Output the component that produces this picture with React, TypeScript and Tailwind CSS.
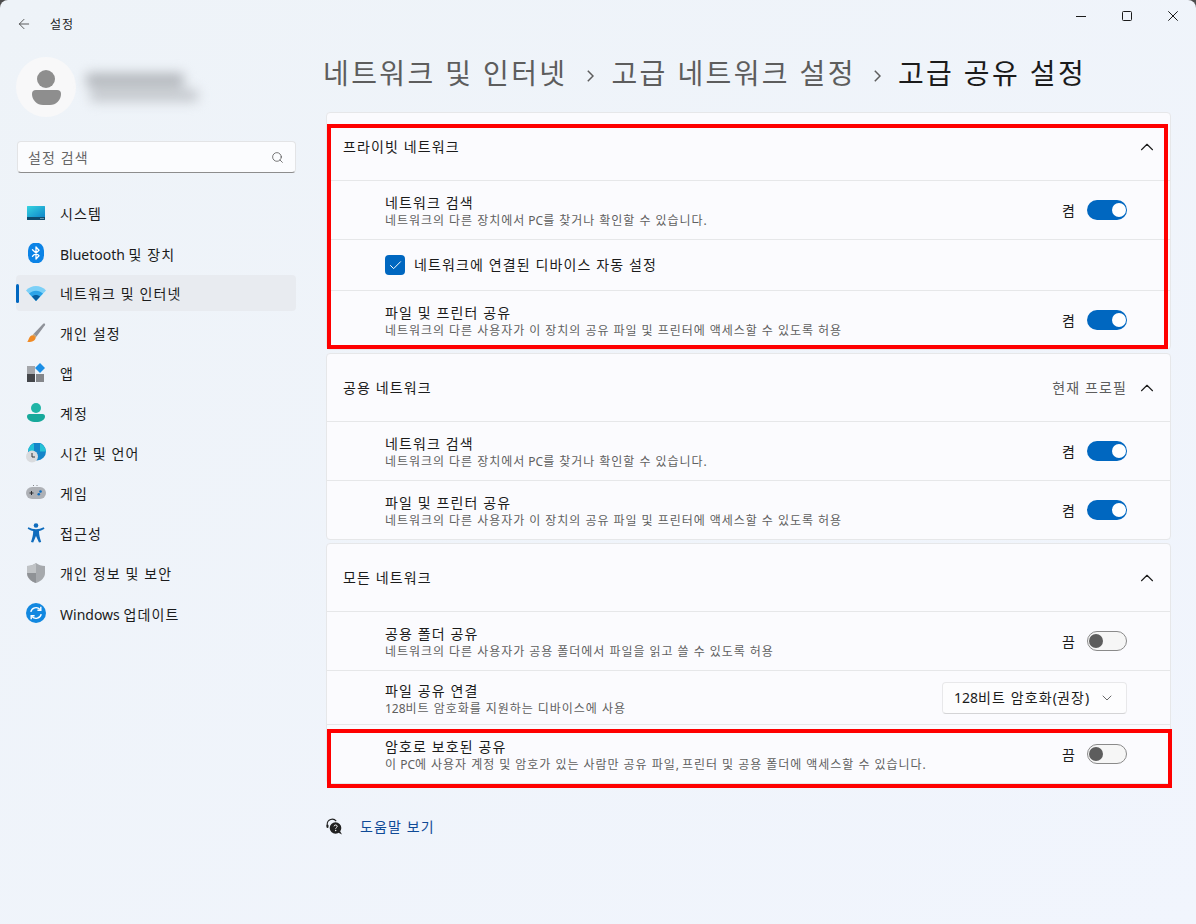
import React from 'react';
import { ArrowLeft, Check, ChevronDown, ChevronUp, Search } from 'lucide-react';

const FONT = "font-['Noto_Sans','Noto_Sans_CJK_KR',sans-serif]";

// Hangul in the screenshot sits on a full em, Noto's on 0.92em, so only those runs get tracked
const Ko = ({ children, tracking = 'tracking-[0.08em]' }: { children: string; tracking?: string }) => (
  <>
    {children.split(/([\uAC00-\uD7A3]+(?: [\uAC00-\uD7A3]+)*)/).map((part, i) =>
      i % 2 === 1 ? (
        <span key={i} className={tracking}>{part}</span>
      ) : (
        part
      )
    )}
  </>
);

// Colourful settings icons, drawn on a 20x20 box
const SystemIcon = () => (
  <svg width="20" height="20" viewBox="0 0 20 20">
    <defs>
      <linearGradient id="sys" x1="0" y1="0" x2="1" y2="1">
        <stop offset="0" stopColor="#35d4e0" />
        <stop offset="1" stopColor="#0f86c9" />
      </linearGradient>
    </defs>
    <path d="M1 3.500a.5.5 0 0 1 .5-.5h17a.5.5 0 0 1 .5.5V14H1z" fill="url(#sys)" />
    <path d="M1 14h18v2.500a.5.5 0 0 1-.5.5h-17a.5.5 0 0 1-.5-.5z" fill="#0e4c6e" />
    <rect x="14.500" y="15" width="1" height="1" fill="#b7dcec" />
    <rect x="16.500" y="15" width="1" height="1" fill="#b7dcec" />
  </svg>
);

const BluetoothIcon = () => (
  <svg width="20" height="20" viewBox="0 0 20 20">
    <rect x="2" y="-0.5" width="16" height="21" rx="8" fill="#0b83e6" />
    <path d="M6.500 6.700 13 12.800 10 16V4l3 3.200-6.500 6.100" fill="none" stroke="#fff" strokeWidth="1.300" strokeLinejoin="round" strokeLinecap="round" />
  </svg>
);

const WifiIcon = () => (
  <svg width="20" height="20" viewBox="0 0 20 20">
    <path d="M0 7.500C2.600 4.600 6.100 3 10 3s7.400 1.600 10 4.500L10 18z" fill="#7cd0f7" />
    <path d="M3 10.600C5 8.700 7.400 7.700 10 7.700s5 1 7 2.900L10 18z" fill="#2ba3e8" />
    <path d="M6 13.600c1.100-1 2.500-1.500 4-1.500s2.900.5 4 1.500L10 18z" fill="#075c9e" />
  </svg>
);

const BrushIcon = () => (
  <svg width="20" height="20" viewBox="0 0 20 20">
    <path d="M18.600.6c.6.4.7 1 .3 1.600L10.500 13.400 7.500 11 17.200.8c.4-.4.9-.5 1.400-.2z" fill="#8f9299" />
    <path d="M7.500 11l3 2.400-.8 1.600L6.300 12.300z" fill="#c9a06a" />
    <path d="M6.200 12.200c1.500.3 3 1.500 3.400 3-.5 2.700-4.500 4.100-8.600 3.600 2-1.400 1.500-5.400 5.200-6.600z" fill="#f08a24" />
  </svg>
);

const AppsIcon = () => (
  <svg width="20" height="20" viewBox="0 0 20 20">
    <rect x="1" y="3" width="8" height="8" fill="#a4a6aa" />
    <rect x="1" y="11" width="8" height="8" fill="#44464a" />
    <rect x="10" y="11" width="8" height="8" fill="#85878b" />
    <path d="m14 0 5 5-5 5-5-5z" fill="#1b8fe6" />
  </svg>
);

const AccountIcon = () => (
  <svg width="20" height="20" viewBox="0 0 20 20">
    <circle cx="10" cy="5" r="5" fill="#1fb5a6" />
    <path d="M1 13.500A2.500 2.500 0 0 1 3.500 11h13a2.500 2.500 0 0 1 2.500 2.500c0 3.500-4 5.500-9 5.500s-9-2-9-5.500z" fill="#17a99b" />
  </svg>
);

const TimeIcon = () => (
  <svg width="20" height="20" viewBox="0 0 20 20">
    <circle cx="11" cy="8.500" r="9" fill="#1585c9" />
    <path d="M11 0a9 9 0 0 1 9 8.500h-6V.6zM2 8c.5-3.500 3-6.500 6-7.400V8z" fill="#25c2d6" />
    <circle cx="6" cy="13.500" r="6" fill="#d9dbde" />
    <path d="M6 10v4h3" fill="none" stroke="#33363a" strokeWidth="1" />
  </svg>
);

const GameIcon = () => (
  <svg width="20" height="20" viewBox="0 0 20 20">
    <rect x="0" y="4" width="20" height="12" rx="6" fill="#aeb1b6" />
    <path d="M3.500 10h4M5.500 8v4" stroke="#2a2c30" strokeWidth="1" />
    <circle cx="14.500" cy="8.500" r="1.300" fill="#0f6cbd" />
    <circle cx="12.800" cy="11.200" r="1.300" fill="#0f6cbd" />
    <circle cx="7.500" cy="2.500" r=".5" fill="#666" />
    <circle cx="11" cy="2.500" r=".5" fill="#666" />
  </svg>
);

const AccessIcon = () => (
  <svg width="20" height="20" viewBox="0 0 20 20">
    <circle cx="10" cy="2.500" r="2.300" fill="#0f6cbd" />
    <path d="M2.300 4.200c2.500 1.300 5 2 7.700 2s5.200-.7 7.700-2l.8 1.500c-1.900 1.200-3.800 2-5.500 2.300 0 3.500.8 7 2.200 11l-2.200.6L10 13l-2.800 6.600-2.200-.6c1.400-4 2.200-7.500 2.200-11-1.700-.3-3.600-1.100-5.500-2.300z" fill="#0f6cbd" />
  </svg>
);

const ShieldIcon = () => (
  <svg width="20" height="20" viewBox="0 0 20 20">
    <path d="M10 0c2.500 2 5.500 3 9 3v7c0 4.500-3.500 8-9 10-5.500-2-9-5.500-9-10V3c3.500 0 6.500-1 9-3z" fill="#a6a9ad" />
    <path d="M10 0v20C4.500 18 1 14.500 1 10V3c3.500 0 6.500-1 9-3z" fill="#c0c3c6" />
    <path d="M1 10h9v10C5 18.500 1.500 14.800 1 10z" fill="#8f9296" />
  </svg>
);

const UpdateIcon = () => (
  <svg width="20" height="20" viewBox="0 0 20 20">
    <circle cx="10" cy="10" r="10" fill="#1288e0" />
    <path d="M4.800 8.800a5.300 5.300 0 0 1 9.200-2.300M15.200 11.200a5.300 5.300 0 0 1-9.200 2.300" fill="none" stroke="#fff" strokeWidth="1.400" />
    <path d="M14.800 3.800v3.400h-3.400M5.200 16.200v-3.400h3.400" fill="none" stroke="#fff" strokeWidth="1.400" />
  </svg>
);

const HelpIcon = () => (
  <svg width="18" height="18" viewBox="0 0 18 18">
    <path d="M1.200 8.500V6.200a5 5 0 0 1 9-3" fill="none" stroke="#222" strokeWidth="1.100" />
    <rect x=".5" y="6.500" width="2" height="3.500" rx="1" fill="#222" />
    <circle cx="9.500" cy="10" r="5.800" fill="#222" />
    <path d="m12 14.500 4 2-2-3.500z" fill="#222" />
    <path d="M8 8.300c.2-1.800 3.200-1.700 3.200 0 0 1.200-1.500 1.200-1.500 2.400" fill="none" stroke="#fff" strokeWidth="1" />
    <circle cx="9.700" cy="12.500" r=".7" fill="#fff" />
  </svg>
);

const NAV_ITEMS = [
  { label: '시스템', icon: <SystemIcon /> },
  { label: 'Bluetooth 및 장치', icon: <BluetoothIcon />, latin: true },
  { label: '네트워크 및 인터넷', icon: <WifiIcon />, active: true },
  { label: '개인 설정', icon: <BrushIcon /> },
  { label: '앱', icon: <AppsIcon /> },
  { label: '계정', icon: <AccountIcon /> },
  { label: '시간 및 언어', icon: <TimeIcon /> },
  { label: '게임', icon: <GameIcon /> },
  { label: '접근성', icon: <AccessIcon /> },
  { label: '개인 정보 및 보안', icon: <ShieldIcon /> },
  { label: 'Windows 업데이트', icon: <UpdateIcon />, latin: true },
];

const Crumb = ({ className }: { className: string }) => (
  <svg width="7" height="12" viewBox="0 0 7 12" className={className}>
    <path d="m.8.8 5.200 5.200-5.200 5.200" fill="none" stroke="#5d5d5d" strokeWidth="1.500" />
  </svg>
);

const Toggle = ({ on }: { on: boolean }) => (
  <div className="flex items-center gap-3">
    <span className="mt-[2px] w-[13px] text-[14px] leading-5 text-[#1b1b1b] whitespace-nowrap">{on ? '켬' : '끔'}</span>
    {on ? (
      <div className="flex h-5 w-10 items-center justify-end rounded-full bg-[#0067c0] pr-[1px]">
        <div className="h-[14px] w-[14px] rounded-full bg-white" />
      </div>
    ) : (
      <div className="flex h-5 w-10 items-center rounded-full border border-[#8a8a8a] bg-[#f6f6f6] pl-[1px]">
        <div className="h-[14px] w-[14px] rounded-full bg-[#5d5d5d]" />
      </div>
    )}
  </div>
);

const RowText = ({ title, sub }: { title: string; sub: string }) => (
  <div className="flex flex-col pt-1">
    <span className="text-[14px] leading-[18px] text-[#1b1b1b]"><Ko>{title}</Ko></span>
    <span className="text-[12px] leading-[18px] text-[#5f5f5f]"><Ko>{sub}</Ko></span>
  </div>
);

const Row = ({ title, sub, on }: { title: string; sub: string; on: boolean }) => (
  <div className="flex h-[59px] items-center justify-between border-b border-[#e6e7e9] pl-[58px] pr-[43px] last:h-[58px] last:border-b-0">
    <RowText title={title} sub={sub} />
    <Toggle on={on} />
  </div>
);

const CardHeader = ({ title, extra }: { title: string; extra?: string }) => (
  <div className="flex h-[68px] items-center justify-between border-b border-[#e6e7e9] pl-4 pr-3">
    <span className="text-[14px] text-[#1b1b1b]"><Ko>{title}</Ko></span>
    <div className="flex items-center gap-[9px]">
      {extra && <span className="text-[14px] text-[#5d5d5d]"><Ko>{extra}</Ko></span>}
      <ChevronUp size={22} strokeWidth={1.2} className="text-[#1b1b1b]" />
    </div>
  </div>
);

const Card = ({ children }: { children: React.ReactNode }) => (
  <div className="rounded-[4px] border border-[#e6e7e9] bg-[#fbfbfe]">{children}</div>
);

export default function App() {
  const titleTracking = 'tracking-[0.085em]';
  return (
    <div className={`${FONT} relative h-[924px] w-[1196px] overflow-hidden bg-[#4d4d4d]`}>
      <div className="flex h-full flex-col rounded-t-[8px] bg-gradient-to-br from-[#eef3f8] to-[#f1f5fd]">
        {/* Title bar */}
        <div className="flex h-[48px] justify-between">
          <div className="flex items-center">
            <ArrowLeft size={16} strokeWidth={1.3} className="ml-4 text-[#444]" />
            <span className="ml-[18px] mt-[1px] text-[12px] text-[#1b1b1b]"><Ko>설정</Ko></span>
          </div>
          <div className="flex items-start gap-[36px] pr-[18px] pt-[11px]">
            <svg width="10" height="10" viewBox="0 0 10 10"><path d="M0 5.500h10" stroke="#1b1b1b" strokeWidth="1" /></svg>
            <svg width="10" height="10" viewBox="0 0 10 10"><rect x=".5" y=".5" width="9" height="9" rx="1" fill="none" stroke="#1b1b1b" strokeWidth="1" /></svg>
            <svg width="10" height="10" viewBox="0 0 10 10"><path d="m.3.3 9.400 9.400M9.700.3.3 9.700" stroke="#1b1b1b" strokeWidth="1" /></svg>
          </div>
        </div>

        <div className="flex flex-1">
          {/* Sidebar */}
          <div className="flex w-[326px] flex-col pl-4 pr-[30px]">
            <div className="mt-[9px] flex items-center">
              <div className="flex h-[60px] w-[60px] flex-col items-center justify-center gap-[2px] rounded-full bg-[#f8f8f9]">
                <div className="h-[18px] w-[18px] rounded-full bg-[#8e8e8e]" />
                <div className="h-[15px] w-[29px] rounded-b-[14px] rounded-t-[5px] bg-[#8e8e8e]" />
              </div>
              <div className="ml-[10px] flex flex-col gap-[2px] blur-[6px]">
                <div className="h-[14px] w-[98px] rounded-sm bg-[#b4b8bd]" />
                <div className="ml-1 h-[13px] w-[108px] rounded-sm bg-[#c6cacf]" />
              </div>
            </div>

            <div className="ml-[1px] mt-6 flex h-8 items-center justify-between rounded-[4px] border border-[#e3e4e6] border-b-[#8d8d8d] bg-[#fbfcfe] pl-[10px] pr-[11px]">
              <span className="text-[14px] text-[#666]"><Ko>설정 검색</Ko></span>
              <Search size={13} strokeWidth={1.2} className="text-[#333]" />
            </div>

            <div className="mt-[22px] flex flex-col gap-1">
              {NAV_ITEMS.map((item) => (
                <div
                  key={item.label}
                  className={`relative flex h-9 items-center rounded-[4px] pl-[10px] ${item.active ? 'bg-[#e8ebf0]' : ''}`}
                >
                  {item.active && (
                    <div className="absolute left-0 top-[9px] h-[19px] w-[3px] rounded-full bg-[#0067c0]" />
                  )}
                  {item.icon}
                  <span className={`ml-[14px] text-[14px] text-[#1b1b1b] ${item.latin ? 'mt-[2px]' : ''}`}><Ko>{item.label}</Ko></span>
                </div>
              ))}
            </div>
          </div>

          {/* Main column */}
          <div className="flex w-[845px] flex-col">
            <div className="-ml-[3px] mt-[5px] flex h-[41px] items-center gap-[17px] whitespace-nowrap text-[28px] leading-[41px] text-[#5d5d5d]">
              <span><Ko tracking={titleTracking}>네트워크 및 인터넷</Ko></span>
              <Crumb className="ml-[3px] mt-[4px]" />
              <span><Ko tracking={titleTracking}>고급 네트워크 설정</Ko></span>
              <Crumb className="ml-[1px] mt-[4px]" />
              <span className="text-[#1b1b1b]"><Ko tracking={titleTracking}>고급 공유 설정</Ko></span>
            </div>

            <div className="mt-[18px] flex flex-col gap-[3px]">
              <Card>
                <CardHeader title="프라이빗 네트워크" />
                <Row title="네트워크 검색" sub="네트워크의 다른 장치에서 PC를 찾거나 확인할 수 있습니다." on />
                <div className="flex h-[51px] items-center border-b border-[#e6e7e9] pl-[58px]">
                  <div className="flex h-5 w-5 items-center justify-center rounded-[4px] bg-[#0067c0]">
                    <Check size={15} strokeWidth={1.6} className="text-white" />
                  </div>
                  <span className="-mt-[2px] ml-[9px] text-[14px] text-[#1b1b1b]"><Ko>네트워크에 연결된 디바이스 자동 설정</Ko></span>
                </div>
                <Row title="파일 및 프린터 공유" sub="네트워크의 다른 사용자가 이 장치의 공유 파일 및 프린터에 액세스할 수 있도록 허용" on />
              </Card>

              <Card>
                <CardHeader title="공용 네트워크" extra="현재 프로필" />
                <Row title="네트워크 검색" sub="네트워크의 다른 장치에서 PC를 찾거나 확인할 수 있습니다." on />
                <Row title="파일 및 프린터 공유" sub="네트워크의 다른 사용자가 이 장치의 공유 파일 및 프린터에 액세스할 수 있도록 허용" on />
              </Card>

              <Card>
                <CardHeader title="모든 네트워크" />
                <Row title="공용 폴더 공유" sub="네트워크의 다른 사용자가 공용 폴더에서 파일을 읽고 쓸 수 있도록 허용" on={false} />
                <div className="flex h-[54px] items-center justify-between border-b border-[#e6e7e9] pl-[58px] pr-[43px]">
                  <RowText title="파일 공유 연결" sub="128비트 암호화를 지원하는 디바이스에 사용" />
                  <div className="flex h-8 w-[185px] items-center justify-between rounded-[4px] border border-[#e8e8ea] border-b-[#d4d4d6] bg-[#fdfdfe] pl-[11px] pr-[11px]">
                    <span className="text-[14px] text-[#1b1b1b] whitespace-nowrap"><Ko>128비트 암호화(권장)</Ko></span>
                    <ChevronDown size={16} strokeWidth={1.2} className="text-[#444]" />
                  </div>
                </div>
                <Row title="암호로 보호된 공유" sub="이 PC에 사용자 계정 및 암호가 있는 사람만 공유 파일, 프린터 및 공용 폴더에 액세스할 수 있습니다." on={false} />
              </Card>
            </div>

            <div className="mt-[32px] flex items-center">
              <HelpIcon />
              <span className="ml-4 text-[14px] text-[#0f4a96]"><Ko>도움말 보기</Ko></span>
            </div>
          </div>
        </div>
      </div>

      {/* Red callouts drawn over the screenshot */}
      <div className="pointer-events-none absolute left-[327px] top-[124px] h-[225px] w-[841px] border-4 border-[#ff0000]" />
      <div className="pointer-events-none absolute left-[327px] top-[729px] h-[59px] w-[845px] border-4 border-[#ff0000]" />
    </div>
  );
}
